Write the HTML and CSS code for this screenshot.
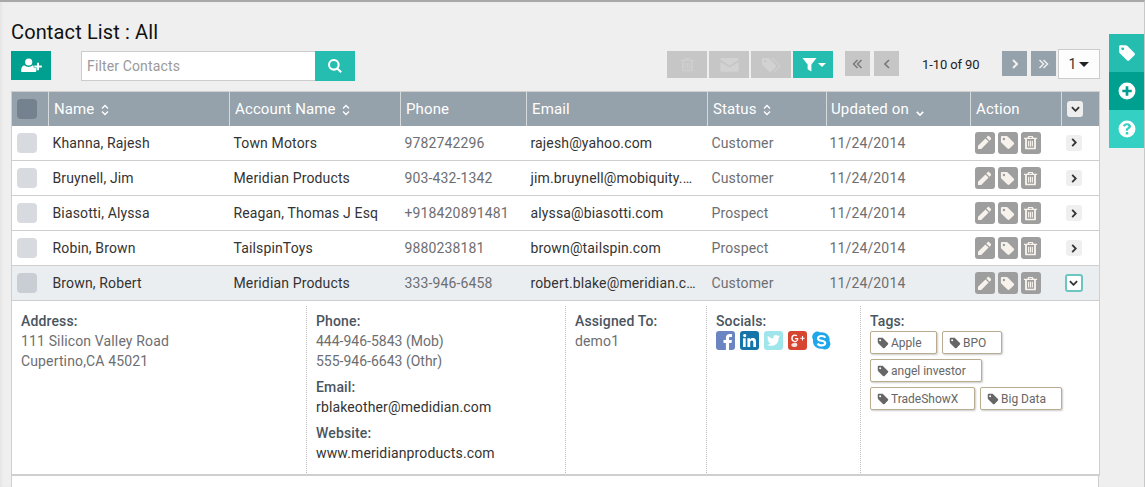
FILE: index.html
```html
<!DOCTYPE html>
<html lang="en">
<head>
    <meta charset="UTF-8">
    <title>Contact List</title>
    <link rel="stylesheet" href="styles.css">
</head>
<body>
    <svg class="sprite" xmlns="http://www.w3.org/2000/svg">
        <symbol id="i-tag" viewBox="0 0 16 16"><path fill-rule="evenodd" d="M1 2.200C1 1.500 1.500 1 2.200 1h4.600c.6 0 1 .2 1.400.6l6.400 6.400c.6.6.6 1.500 0 2.100l-4.500 4.400c-.6.6-1.500.6-2.100 0L1.600 8.200C1.200 7.800 1 7.400 1 6.800zM4.200 3a1.300 1.300 0 1 0 0 2.600 1.300 1.300 0 0 0 0-2.600z"/></symbol>
        <symbol id="i-tags" viewBox="0 0 20 16"><path fill-rule="evenodd" d="M1 2.200C1 1.500 1.500 1 2.200 1h4.600c.6 0 1 .2 1.400.6l6.400 6.400c.6.6.6 1.500 0 2.100l-4.500 4.400c-.6.6-1.500.6-2.100 0L1.600 8.200C1.200 7.800 1 7.400 1 6.800zM4.200 3a1.300 1.300 0 1 0 0 2.600 1.300 1.300 0 0 0 0-2.600z"/><path d="M10 1h1.200c.6 0 1 .2 1.400.6l6 6.400c.6.6.6 1.500 0 2.100l-4.400 4.400c-.5.5-1.100.6-1.700.3l4.300-4.300c1-1 1-2.400 0-3.400z"/></symbol>
        <symbol id="i-pencil" viewBox="0 0 16 16"><path d="M11.300 1.300c.5-.5 1.200-.5 1.700 0l1.700 1.700c.5.5.5 1.200 0 1.700l-1.300 1.300L10 2.600zM9 3.600 12.400 7l-7.900 7.900L1 15l.1-3.500z"/></symbol>
        <symbol id="i-trash" viewBox="0 0 16 16"><path fill-rule="evenodd" d="M5.500 1h5l.8 1.800H15v1.500h-1.200V14c0 .8-.6 1.300-1.300 1.300h-9c-.7 0-1.300-.5-1.300-1.300V4.300H1V2.800h3.700zM6.400 2.800h3.200l-.3-.7H6.700zM4.200 4.300V13.700h7.600V4.300zM5.400 6h1.200v6.300H5.400zm2 0h1.200v6.300H7.400zm2 0h1.200v6.300H9.400z"/></symbol>
        <symbol id="i-envelope" viewBox="0 0 20 16"><path d="M1.500 1h17c.7 0 1.300.6 1.300 1.300 0 .5-.3.9-.7 1.200L10 9.300.9 3.500C.5 3.200.2 2.800.2 2.300.2 1.600.8 1 1.500 1z"/><path d="M.2 5.200 10 11.300l9.800-6.100v9.300c0 .7-.6 1.300-1.300 1.300h-17c-.7 0-1.300-.6-1.300-1.300z"/></symbol>
        <symbol id="i-search" viewBox="0 0 16 16"><path fill-rule="evenodd" d="M6.800 1a5.800 5.800 0 0 1 4.700 9.200l3.400 3.400-1.500 1.500-3.400-3.400A5.800 5.800 0 1 1 6.800 1zm0 2a3.800 3.800 0 1 0 0 7.600 3.800 3.800 0 0 0 0-7.600z"/></symbol>
        <symbol id="i-user-plus" viewBox="0 0 22 16"><circle cx="8" cy="4.300" r="3.800"/><path d="M1 15c-.6 0-1-.4-1-1 0-3.500 1-6 3.500-6 1 .9 2.800 1.500 4.500 1.500s3-.5 4-1.400c.6 0 1 .1 1.300.3v2.100h3v1.500l-.3 2c0 .6-.4 1-1 1z"/><path d="M17 5h2v3h3v2h-3v3h-2v-3h-3V8h3z"/></symbol>
        <symbol id="i-filter" viewBox="0 0 16 16"><path d="M.5 1h15L10 8v7.500L6 13V8z"/></symbol>
        <symbol id="i-plus" viewBox="0 0 16 16"><path fill-rule="evenodd" d="M8 .5a7.500 7.500 0 1 1 0 15 7.500 7.500 0 0 1 0-15zM6.800 3.800v3H3.800v2.400h3v3h2.400v-3h3V6.800h-3v-3z"/></symbol>
        <symbol id="i-help" viewBox="0 0 16 16"><path fill-rule="evenodd" d="M8 .5a7.500 7.500 0 1 1 0 15 7.500 7.500 0 0 1 0-15zM8 2.800c-1.900 0-3.200 1-3.600 2.600l1.900.6c.2-.8.800-1.300 1.600-1.300s1.300.4 1.300 1c0 .5-.4.800-1 1.200-.9.600-1.300 1.200-1.300 2.200v.5h2.100V9c0-.4.200-.6.800-1C11 7.400 11.500 6.600 11.500 5.600c0-1.700-1.500-2.800-3.500-2.800zM6.900 10.600v2.200h2.200v-2.200z"/></symbol>
        <symbol id="i-sort" viewBox="0 0 8 12"><path fill="none" stroke="currentColor" stroke-width="1.300" d="M1 4.500 4 1.500l3 3M1 7.500l3 3 3-3"/></symbol>
        <symbol id="i-down" viewBox="0 0 10 6"><path fill="none" stroke="currentColor" stroke-width="2" d="M1 1l4 4 4-4"/></symbol>
        <symbol id="i-right" viewBox="0 0 6 10"><path fill="none" stroke="currentColor" stroke-width="2" d="M1 1l4 4-4 4"/></symbol>
        <symbol id="i-left" viewBox="0 0 6 10"><path fill="none" stroke="currentColor" stroke-width="1.600" d="M5 1 1 5l4 4"/></symbol>
        <symbol id="i-dbl-left" viewBox="0 0 10 10"><path fill="none" stroke="currentColor" stroke-width="1.500" d="M5 1 1 5l4 4M9 1 5 5l4 4"/></symbol>
        <symbol id="i-dbl-right" viewBox="0 0 10 10"><path fill="none" stroke="currentColor" stroke-width="1.500" d="M1 1l4 4-4 4M5 1l4 4-4 4"/></symbol>
    </svg>

    <div class="side-tabs">
        <a class="side-tab tab-tag"><svg><use href="#i-tag"/></svg></a>
        <a class="side-tab tab-add"><svg><use href="#i-plus"/></svg></a>
        <a class="side-tab tab-help"><svg><use href="#i-help"/></svg></a>
    </div>

    <main class="page">
        <h1 class="page-title">Contact List : All</h1>

        <div class="toolbar">
            <button class="btn-add"><svg><use href="#i-user-plus"/></svg></button>
            <div class="search">
                <input class="search-input" type="text" placeholder="Filter Contacts">
                <button class="search-btn"><svg><use href="#i-search"/></svg></button>
            </div>
            <div class="bulk">
                <button class="bulk-btn off"><svg class="ic-trash"><use href="#i-trash"/></svg></button>
                <button class="bulk-btn off"><svg class="ic-mail"><use href="#i-envelope"/></svg></button>
                <button class="bulk-btn off"><svg class="ic-tags"><use href="#i-tags"/></svg></button>
                <button class="bulk-btn filter"><svg class="ic-filter"><use href="#i-filter"/></svg><span class="caret"></span></button>
            </div>
            <div class="pager">
                <button class="page-btn off"><svg><use href="#i-dbl-left"/></svg></button>
                <button class="page-btn off"><svg class="thin"><use href="#i-left"/></svg></button>
                <span class="page-info">1-10 of 90</span>
                <button class="page-btn"><svg class="thin"><use href="#i-right"/></svg></button>
                <button class="page-btn"><svg><use href="#i-dbl-right"/></svg></button>
                <div class="page-select">1<span class="caret dark"></span></div>
            </div>
        </div>

        <table class="contacts">
            <colgroup>
                <col class="c-check"><col class="c-name"><col class="c-account"><col class="c-phone"><col class="c-email"><col class="c-status"><col class="c-updated"><col class="c-action"><col class="c-toggle">
            </colgroup>
            <thead>
                <tr>
                    <th><span class="check head"></span></th>
                    <th>Name <svg class="sort"><use href="#i-sort"/></svg></th>
                    <th>Account Name <svg class="sort"><use href="#i-sort"/></svg></th>
                    <th>Phone</th>
                    <th>Email</th>
                    <th>Status <svg class="sort"><use href="#i-sort"/></svg></th>
                    <th>Updated on <svg class="sort-down"><use href="#i-down"/></svg></th>
                    <th>Action</th>
                    <th><span class="toggle head"><svg><use href="#i-down"/></svg></span></th>
                </tr>
            </thead>
            <tbody>
                <tr>
                    <td><span class="check"></span></td>
                    <td class="dark">Khanna, Rajesh</td>
                    <td class="dark">Town Motors</td>
                    <td>9782742296</td>
                    <td class="dark">rajesh@yahoo.com</td>
                    <td>Customer</td>
                    <td>11/24/2014</td>
                    <td><div class="actions"><span class="act"><svg><use href="#i-pencil"/></svg></span><span class="act"><svg><use href="#i-tag"/></svg></span><span class="act"><svg><use href="#i-trash"/></svg></span></div></td>
                    <td><span class="toggle"><svg class="side"><use href="#i-right"/></svg></span></td>
                </tr>
                <tr>
                    <td><span class="check"></span></td>
                    <td class="dark">Bruynell, Jim</td>
                    <td class="dark">Meridian Products</td>
                    <td>903-432-1342</td>
                    <td class="dark">jim.bruynell@mobiquity.…</td>
                    <td>Customer</td>
                    <td>11/24/2014</td>
                    <td><div class="actions"><span class="act"><svg><use href="#i-pencil"/></svg></span><span class="act"><svg><use href="#i-tag"/></svg></span><span class="act"><svg><use href="#i-trash"/></svg></span></div></td>
                    <td><span class="toggle"><svg class="side"><use href="#i-right"/></svg></span></td>
                </tr>
                <tr>
                    <td><span class="check"></span></td>
                    <td class="dark">Biasotti, Alyssa</td>
                    <td class="dark">Reagan, Thomas J Esq</td>
                    <td>+918420891481</td>
                    <td class="dark">alyssa@biasotti.com</td>
                    <td>Prospect</td>
                    <td>11/24/2014</td>
                    <td><div class="actions"><span class="act"><svg><use href="#i-pencil"/></svg></span><span class="act"><svg><use href="#i-tag"/></svg></span><span class="act"><svg><use href="#i-trash"/></svg></span></div></td>
                    <td><span class="toggle"><svg class="side"><use href="#i-right"/></svg></span></td>
                </tr>
                <tr>
                    <td><span class="check"></span></td>
                    <td class="dark">Robin, Brown</td>
                    <td class="dark">TailspinToys</td>
                    <td>9880238181</td>
                    <td class="dark">brown@tailspin.com</td>
                    <td>Prospect</td>
                    <td>11/24/2014</td>
                    <td><div class="actions"><span class="act"><svg><use href="#i-pencil"/></svg></span><span class="act"><svg><use href="#i-tag"/></svg></span><span class="act"><svg><use href="#i-trash"/></svg></span></div></td>
                    <td><span class="toggle"><svg class="side"><use href="#i-right"/></svg></span></td>
                </tr>
                <tr class="open">
                    <td><span class="check"></span></td>
                    <td class="dark">Brown, Robert</td>
                    <td class="dark">Meridian Products</td>
                    <td>333-946-6458</td>
                    <td class="dark">robert.blake@meridian.c…</td>
                    <td>Customer</td>
                    <td>11/24/2014</td>
                    <td><div class="actions"><span class="act"><svg><use href="#i-pencil"/></svg></span><span class="act"><svg><use href="#i-tag"/></svg></span><span class="act"><svg><use href="#i-trash"/></svg></span></div></td>
                    <td><span class="toggle active"><svg><use href="#i-down"/></svg></span></td>
                </tr>
                <tr class="detail-row">
                    <td colspan="9">
                        <div class="detail">
                            <div class="d-col d-address">
                                <h4>Address:</h4>
                                <p>111 Silicon Valley Road</p>
                                <p>Cupertino,CA 45021</p>
                            </div>
                            <div class="d-col d-phone">
                                <h4>Phone:</h4>
                                <p class="num">444-946-5843 (Mob)</p>
                                <p class="num">555-946-6643 (Othr)</p>
                                <h4 class="gap">Email:</h4>
                                <p class="dark">rblakeother@medidian.com</p>
                                <h4 class="gap">Website:</h4>
                                <p class="dark">www.meridianproducts.com</p>
                            </div>
                            <div class="d-col d-assigned">
                                <h4>Assigned To:</h4>
                                <p>demo1</p>
                            </div>
                            <div class="d-col d-socials">
                                <h4>Socials:</h4>
                                <div class="socials">
                                    <svg class="soc" viewBox="0 0 19 19"><rect width="19" height="19" rx="3" fill="#6a85c2"/><path fill="#fff" d="M13 19v-7h2.500l.4-3H13V7.300c0-.8.300-1.300 1.400-1.300H16V3.200c-.3 0-1.200-.1-2.300-.1-2.300 0-3.800 1.400-3.800 3.900V9H7.500v3h2.400v7z"/></svg>
                                    <svg class="soc" viewBox="0 0 19 19"><rect width="19" height="19" rx="3" fill="#1574a8"/><path fill="#fff" d="M3 7.300h2.700V16H3zM4.300 3a1.600 1.600 0 1 1 0 3.100 1.600 1.600 0 0 1 0-3.100zM7.400 7.300H10v1.200c.4-.7 1.300-1.400 2.700-1.400 2.800 0 3.300 1.800 3.300 4.200V16h-2.700v-4.100c0-1 0-2.300-1.400-2.300s-1.700 1.100-1.700 2.200V16H7.400z"/></svg>
                                    <svg class="soc" viewBox="0 0 19 19"><rect width="19" height="19" rx="3" fill="#9fe6ec"/><path fill="#fff" d="M16 5.300c-.5.200-1 .4-1.500.4.500-.3 1-.8 1.200-1.400-.5.300-1.100.5-1.700.6a2.700 2.700 0 0 0-4.600 2.500C7.200 7.300 5.200 6.300 3.900 4.700c-.7 1.200-.4 2.800.8 3.600-.4 0-.8-.1-1.200-.3 0 1.300.9 2.500 2.200 2.700-.4.100-.8.100-1.200 0 .3 1.100 1.300 1.900 2.500 1.900-1.200.9-2.600 1.300-4 1.100 3.900 2.500 11.900 1.300 11.700-7.200.5-.2 1-.7 1.300-1.200z"/></svg>
                                    <svg class="soc" viewBox="0 0 19 19"><rect width="19" height="19" rx="3" fill="#d5452f"/><path fill="#fff" d="M7 3.500c1 0 1.700.3 2.300.9l-.9.900C8 4.900 7.500 4.700 7 4.700 5.700 4.700 4.700 5.800 4.700 7.300S5.700 9.900 7 9.900c1.200 0 1.900-.7 2-1.600H7V7.100h3.300c.3 2.300-.9 4-3.300 4a3.800 3.800 0 0 1 0-7.600zM14 5h1v1.700h1.700v1H15v1.700h-1V7.700h-1.700v-1H14z"/><path fill="#fff" d="M6.500 11.500c1 .1 2.900.6 2.900 2.200 0 1.400-1.400 2.300-3.200 2.300-1.600 0-2.900-.7-2.900-1.900 0-1.400 1.600-2.100 3.200-2.200z" opacity=".85"/></svg>
                                    <svg class="soc" viewBox="0 0 19 19"><path fill="#1ea7ea" d="M5.500.5c1 0 1.900.4 2.600.9 3.500-.5 7 1 8.600 3.800.9 1.700 1.100 3.400.8 4.800.6 1 .9 1.900.9 2.800 0 3-2.300 5.700-5.500 5.700-1 0-1.800-.3-2.600-.8-3.300.5-6.500-.7-8.200-3.400C1 12.700.8 10.700 1.100 9.100.6 8.200.2 7.200.2 6.100.2 3 2.500.5 5.500.5z"/><path fill="none" stroke="#fff" stroke-width="2.200" d="M13.300 6.800C12.800 5.800 11.400 5 9.600 5 7.700 5 6 5.800 6 7.400c0 3.300 7.200 1.500 7.200 4.700 0 1.400-1.500 2.300-3.600 2.300-2 0-3.300-.8-3.900-2"/></svg>
                                </div>
                            </div>
                            <div class="d-col d-tags">
                                <h4>Tags:</h4>
                                <div class="tag-list">
                                    <span class="tag w-apple"><svg><use href="#i-tag"/></svg>Apple</span>
                                    <span class="tag w-bpo"><svg><use href="#i-tag"/></svg>BPO</span>
                                    <span class="tag w-angel"><svg><use href="#i-tag"/></svg>angel investor</span>
                                    <span class="tag w-trade"><svg><use href="#i-tag"/></svg>TradeShowX</span>
                                    <span class="tag w-big"><svg><use href="#i-tag"/></svg>Big Data</span>
                                </div>
                            </div>
                        </div>
                    </td>
                </tr>
            </tbody>
        </table>
        <div class="after-table"></div>
    </main>
</body>
</html>
```

FILE: styles.css
```css
* {
    box-sizing: border-box;
}

html, body {
    height: 487px;
}

body {
    margin: 0;
    overflow: hidden;
    font-family: Roboto, "Liberation Sans", sans-serif;
    font-size: 14px;
    color: #6d6e71;
    background-color: #efefef;
    border-top: 2px solid #a8a8a8;
    border-right: 1px solid #c8c8c8;
    box-shadow: inset 2px 0 2px #e6e6e6;
}

button {
    border: none;
    padding: 0;
    display: flex;
    align-items: center;
    justify-content: center;
    color: white;
}

.sprite {
    display: none;
}

.page {
    padding: 18px 0 0 11px;
    width: 1100px;
}

.page-title {
    margin: 0;
    font-size: 20px;
    font-weight: 400;
    line-height: 24px;
    letter-spacing: .13px;
    color: #111;
}

/* toolbar */
.toolbar {
    display: flex;
    height: 30px;
    margin-top: 7px;
}

.btn-add {
    width: 40px;
    height: 29px;
    background-color: #00a091;
}

.btn-add svg {
    width: 21px;
    height: 15px;
    fill: white;
}

.search {
    display: flex;
    width: 274px;
    height: 30px;
    margin-left: 30px;
}

.search-input {
    width: 235px;
    height: 30px;
    border: 1px solid #ccc;
    border-right: none;
    padding: 0 5px;
    font-family: inherit;
    font-size: 14px;
    letter-spacing: .14px;
    outline: none;
}

.search-input::placeholder {
    color: #9a9a9a;
}

.search-btn {
    width: 40px;
    height: 30px;
    margin-left: -1px;
    background-color: #26bdb1;
}

.search-btn svg {
    width: 16px;
    height: 16px;
    fill: white;
}

.bulk {
    display: flex;
    gap: 2px;
    margin-left: 312px;
}

.bulk-btn {
    width: 40px;
    height: 27px;
    background-color: #c6c6c6;
}

.bulk-btn.filter {
    background-color: #26bdb1;
}

.bulk-btn svg {
    fill: #d2d2d2;
}

.ic-trash {
    width: 15px;
    height: 15px;
    opacity: .8;
}

.ic-mail {
    width: 19px;
    height: 15px;
}

.ic-tags {
    width: 20px;
    height: 16px;
}

.bulk-btn .ic-filter {
    width: 15px;
    height: 15px;
    margin-left: 2px;
    fill: white;
}

.caret {
    width: 0;
    height: 0;
    margin-left: 1px;
    border-left: 4px solid transparent;
    border-right: 4px solid transparent;
    border-top: 4px solid white;
}

.caret.dark {
    margin-left: 3px;
    border-left-width: 5px;
    border-right-width: 5px;
    border-top: 5px solid #222;
}

.pager {
    display: flex;
    margin-left: 12px;
    align-items: flex-start;
}

.page-btn {
    width: 25px;
    height: 25px;
    margin-right: 4px;
    color: #eef0f2;
    background-color: #95a1ab;
}

.page-btn.off {
    color: #77797b;
    background-color: #c6c6c6;
}

.page-btn svg {
    width: 11px;
    height: 10px;
}

.page-btn svg.thin {
    width: 6px;
}

.page-info {
    width: 99px;
    padding-left: 19px;
    line-height: 27px;
    font-size: 13px;
    letter-spacing: -.1px;
    color: #222;
}

.page-select {
    display: flex;
    align-items: center;
    justify-content: center;
    width: 42px;
    height: 30px;
    margin: -2px 0 0 -2px;
    border: 1px solid #ccc;
    background-color: #fdfdfd;
    color: #333;
}

/* side tabs, they sit on top of the page */
.side-tabs {
    position: absolute;
    top: 34px;
    right: 1px;
    width: 35px;
}

.side-tab {
    display: flex;
    align-items: center;
    justify-content: center;
    height: 38px;
}

.side-tab svg {
    width: 18px;
    height: 18px;
    fill: white;
}

.tab-tag {
    background-color: #26bdb1;
}

.tab-add {
    background-color: #00a091;
}

.tab-help {
    background-color: #33d0c3;
}

/* table */
.contacts {
    width: 1088px;
    margin-top: 10px;
    border-collapse: collapse;
    table-layout: fixed;
    background-color: white;
    border: 1px solid #cfcfcf;
}

.c-check { width: 37px; }
.c-name { width: 181px; }
.c-account { width: 171px; }
.c-phone { width: 126px; }
.c-email { width: 181px; }
.c-status { width: 119px; }
.c-updated { width: 144px; }
.c-action { width: 91px; }
.c-toggle { width: 38px; }

.contacts th {
    height: 34px;
    padding: 0 0 0 5px;
    text-align: left;
    font-size: 15px;
    font-weight: 400;
    letter-spacing: .12px;
    color: white;
    background-color: #95a1ab;
    border-left: 1px solid #d5dadd;
    white-space: nowrap;
}

.contacts th:first-child {
    border-left: none;
}

.contacts th:nth-child(7) {
    padding-left: 4px;
}

.contacts td {
    height: 35px;
    padding: 0 0 0 4px;
    border-bottom: 1px solid #cfcfcf;
    letter-spacing: .14px;
    white-space: nowrap;
}

.contacts td:first-child {
    padding-left: 5px;
}

.contacts td:nth-child(7) {
    padding-left: 3px;
}

.contacts .dark,
.detail .dark {
    color: #333;
}

.open td {
    background-color: #ebeef1;
}

.check {
    display: block;
    width: 20px;
    height: 20px;
    border-radius: 4px;
    background-color: #d7dade;
}

.open .check {
    background-color: #c9ced5;
}

.check.head {
    background-color: #74818e;
}

.sort {
    width: 8px;
    height: 12px;
    margin-left: 3px;
    vertical-align: -2px;
    color: white;
}

.sort-down {
    width: 8px;
    height: 5px;
    margin-left: 3px;
    vertical-align: -2px;
    color: white;
}

.actions {
    display: flex;
    gap: 3px;
}

.act {
    display: flex;
    align-items: center;
    justify-content: center;
    width: 20px;
    height: 22px;
    border-radius: 3px;
    background-color: #9e9e9e;
}

.act svg {
    width: 15px;
    height: 15px;
    fill: #f7f3ec;
}

.toggle {
    display: flex;
    align-items: center;
    justify-content: center;
    width: 16px;
    height: 16px;
    border-radius: 3px;
    background-color: #efefef;
    color: #333;
}

.toggle svg {
    width: 9px;
    height: 6px;
}

.toggle svg.side {
    width: 6px;
    height: 9px;
}

.toggle.head {
    background-color: #eee;
}

.toggle.active {
    width: 18px;
    height: 18px;
    margin-left: -1px;
    background-color: white;
    border: 2px solid #6cc5bf;
}

/* expanded row */
.contacts .detail-row td {
    height: 174px;
    padding: 5px 0 0 0;
    border-bottom: 2px solid #cfcfcf;
}

.detail {
    display: flex;
    height: 167px;
}

.d-col {
    padding: 5px 0 0 9px;
    border-left: 1px dotted #bdbdbd;
    line-height: 20px;
    color: #6d6e71;
}

.d-address {
    width: 294px;
    border-left: none;
}

.d-phone {
    width: 259px;
}

.d-assigned {
    width: 141px;
}

.d-socials {
    width: 154px;
}

.d-tags {
    width: 238px;
}

.d-col h4 {
    margin: 0;
    font-size: 14px;
    font-weight: 500;
    line-height: 20px;
    color: #4a5560;
}

.d-col h4.gap {
    margin-top: 6px;
}

.d-col p {
    margin: 0;
}

.d-col p.num {
    letter-spacing: 0;
}

.socials {
    display: flex;
    gap: 5px;
}

.soc {
    width: 19px;
    height: 19px;
}

.tag-list {
    display: flex;
    flex-wrap: wrap;
    gap: 5px;
}

.tag {
    display: flex;
    align-items: center;
    height: 23px;
    padding-left: 6px;
    border: 1px solid #b8ad90;
    border-radius: 2px;
    box-shadow: 1px 1px 2px #ccc;
    font-size: 12px;
    letter-spacing: 0;
    color: #666;
    background-color: white;
}

.tag svg {
    width: 12px;
    height: 12px;
    margin-right: 2px;
    fill: #666;
}

.w-apple { width: 67px; }
.w-bpo { width: 60px; }
.w-angel { width: 112px; margin-right: 60px; }
.w-trade { width: 105px; }
.w-big { width: 82px; }

.after-table {
    width: 1088px;
    height: 20px;
    background-color: white;
    border-left: 1px solid #cfcfcf;
    border-right: 1px solid #cfcfcf;
}
```
